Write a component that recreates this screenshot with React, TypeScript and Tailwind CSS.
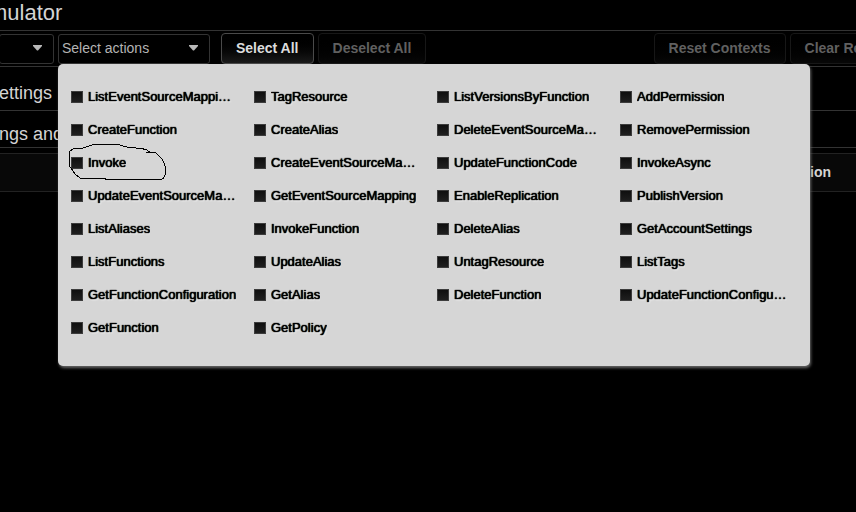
import { useState } from 'react';
import type { ReactNode } from 'react';
import clsx from 'clsx';

const ACTIONS = [
  'ListEventSourceMappings',
  'TagResource',
  'ListVersionsByFunction',
  'AddPermission',
  'CreateFunction',
  'CreateAlias',
  'DeleteEventSourceMapping',
  'RemovePermission',
  'Invoke',
  'CreateEventSourceMapping',
  'UpdateFunctionCode',
  'InvokeAsync',
  'UpdateEventSourceMapping',
  'GetEventSourceMapping',
  'EnableReplication',
  'PublishVersion',
  'ListAliases',
  'InvokeFunction',
  'DeleteAlias',
  'GetAccountSettings',
  'ListFunctions',
  'UpdateAlias',
  'UntagResource',
  'ListTags',
  'GetFunctionConfiguration',
  'GetAlias',
  'DeleteFunction',
  'UpdateFunctionConfiguration',
  'GetFunction',
  'GetPolicy',
];

function Dropdown({ label, text, className }: { label: string; text: string; className: string }) {
  return (
    <div className={clsx('relative shrink-0', className)}>
      <select
        aria-label={label}
        className="block h-[30px] w-full appearance-none rounded-[3px] border border-[#333] bg-black pb-[2px] pl-[3px] pr-6 text-sm text-[#b4b4b4]"
      >
        <option>{text}</option>
      </select>
      <svg
        className="pointer-events-none absolute right-3 top-[11px]"
        width="9"
        height="6"
        viewBox="0 0 9 6"
        fill="#b8b8b8"
      >
        <path d="M0 0h9v1L5 5.5H4L0 1z" />
      </svg>
    </div>
  );
}

function ToolbarButton({
  children,
  disabled,
  onClick,
}: {
  children: ReactNode;
  disabled?: boolean;
  onClick?: () => void;
}) {
  return (
    <button
      type="button"
      disabled={disabled}
      onClick={onClick}
      className={clsx(
        'h-[31px] shrink-0 whitespace-nowrap rounded-[4px] border px-[14px] pb-[2px] text-sm font-bold',
        disabled
          ? 'border-[#171717] bg-linear-to-b from-black to-[#080808] text-[#606060]'
          : 'border-[#4a4a4a] bg-linear-to-b from-black to-[#1a1a1a] text-[#dcdcdc]'
      )}
    >
      {children}
    </button>
  );
}

function ActionItem({
  name,
  checked,
  onToggle,
}: {
  name: string;
  checked: boolean;
  onToggle: () => void;
}) {
  return (
    <li className="relative pr-4">
      <label className="flex h-[33px] items-center gap-[5px]">
        <input
          type="checkbox"
          checked={checked}
          onChange={onToggle}
          className="size-3 shrink-0 appearance-none border border-[#3c3c3c] bg-linear-to-b from-[#0f0f0f] to-[#1f1f1f] checked:bg-blue-700"
        />
        <span className="truncate text-[13px] leading-5 text-black [text-shadow:0_0_1px_#000,0_0_1px_#000,1px_1px_2px_#fff]">
          {name}
        </span>
      </label>
      {name === 'Invoke' && (
        <svg
          className="pointer-events-none absolute -left-[7px] -top-[6px]"
          width="104"
          height="42"
          viewBox="192 210 312 126"
          fill="none"
          stroke="#000"
          strokeWidth="3"
          shapeRendering="crispEdges"
        >
          <path d="M438 247L465 247L485 265L494 282L497 300L495 314L490 325L485 328L320 328L310 325L242 325L226 313L212 293L209 290L209 244L219 237L243 236L280 224L355 224L381 231L408 234L438 238L448 246" />
        </svg>
      )}
    </li>
  );
}

export default function App() {
  const [selected, setSelected] = useState<string[]>([]);

  const toggle = (name: string) => {
    setSelected((prev) =>
      prev.includes(name) ? prev.filter((n) => n !== name) : [...prev, name]
    );
  };

  return (
    <div className="min-h-screen overflow-hidden bg-black font-['Liberation_Sans',Arial,sans-serif] text-[#d4d4d4]">
      <header className="flex h-[30px] items-center pb-1">
        <h1 className="-ml-[11px] text-[22px] leading-6">mulator</h1>
      </header>

      <div className="relative flex h-[37px] items-start border-y border-[#333] pt-[2px]">
        <div className="-ml-px flex pt-px">
          <Dropdown label="Service" text="" className="w-[55px]" />
          <Dropdown label="Actions" text="Select actions" className="ml-1 w-[152px]" />
        </div>
        <div className="ml-[11px] flex gap-1">
          <ToolbarButton onClick={() => setSelected(ACTIONS)}>Select All</ToolbarButton>
          <ToolbarButton disabled={selected.length === 0} onClick={() => setSelected([])}>
            Deselect All
          </ToolbarButton>
        </div>
        <div className="-mr-[53px] ml-auto flex gap-1">
          <ToolbarButton disabled>Reset Contexts</ToolbarButton>
          <ToolbarButton disabled>Clear Results</ToolbarButton>
        </div>

        <div className="absolute left-[58px] top-[33px] z-10 w-[752px] rounded-[5px] bg-[#d6d6d6] pb-[22px] pl-[13px] pr-[7px] pt-4 shadow-[1px_2px_3px_#666]">
          <ul className="grid grid-cols-4">
            {ACTIONS.map((name) => (
              <ActionItem
                key={name}
                name={name}
                checked={selected.includes(name)}
                onToggle={() => toggle(name)}
              />
            ))}
          </ul>
        </div>
      </div>

      <section className="flex h-11 items-center border-b border-[#333] pt-2">
        <h2 className="-ml-px text-lg leading-6">ettings</h2>
      </section>
      <section className="flex h-[37px] items-center border-b border-[#333] pt-[10px]">
        <h2 className="-ml-px text-lg leading-6">ngs and</h2>
      </section>

      <table className="mt-[5px] w-full">
        <thead>
          <tr className="h-[38px] border-y border-[#222] bg-[#080808]">
            <th className="pb-[2px] pr-[25px] text-right text-sm font-bold">ion</th>
          </tr>
        </thead>
      </table>
    </div>
  );
}
